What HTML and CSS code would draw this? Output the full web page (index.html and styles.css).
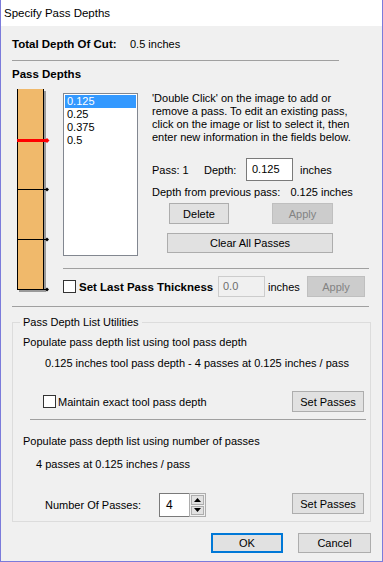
FILE: index.html
```html
<!DOCTYPE html>
<html>
<head>
<meta charset="utf-8">
<title>Specify Pass Depths</title>
<link rel="stylesheet" href="styles.css">
</head>
<body>
<div class="window">
  <div class="titlebar">Specify Pass Depths</div>
  <div class="content">
    <div class="total-row"><span class="total-label">Total Depth Of Cut:</span><span>0.5 inches</span></div>
    <div class="sep sep-top"></div>
    <div class="section-title">Pass Depths</div>
    <div class="pass-area">
      <svg class="diagram" width="34" height="206" viewBox="0 0 34 206">
        <rect x="2" y="2" width="27" height="201" fill="#9a9a9a"/>
        <rect x="0" y="0" width="27" height="201" fill="#f0b96b"/>
        <rect x="0" y="0" width="1" height="201" fill="#000"/>
        <rect x="26" y="0" width="1" height="201" fill="#000"/>
        <rect x="0" y="50" width="30" height="3" fill="#ff0000"/>
        <polygon points="30,49 32.5,51.5 30,54 27.5,51.5" fill="#ff0000"/>
        <rect x="0" y="100" width="30" height="1" fill="#000"/>
        <polygon points="30,98.5 32,100.5 30,102.5 28,100.5" fill="#000"/>
        <rect x="0" y="150" width="30" height="1" fill="#000"/>
        <polygon points="30,148.5 32,150.5 30,152.5 28,150.5" fill="#000"/>
        <rect x="0" y="200" width="30" height="1" fill="#000"/>
        <polygon points="30,198.5 32,200.5 30,202.5 28,200.5" fill="#000"/>
      </svg>
      <div class="pass-main">
        <div class="pass-top">
          <div class="listbox">
            <div class="item selected">0.125</div>
            <div class="item">0.25</div>
            <div class="item">0.375</div>
            <div class="item">0.5</div>
          </div>
          <div class="pass-side">
            <p class="help">'Double Click' on the image to add or<br>remove a pass. To edit an existing pass,<br>click on the image or list to select it, then<br>enter new information in the fields below.</p>
            <div class="depth-row">
              <span class="pass-label">Pass: 1</span>
              <span class="depth-label">Depth:</span>
              <div class="textbox depth-input">0.125</div>
              <span class="unit">inches</span>
            </div>
            <div class="prev-row"><span class="prev-label">Depth from previous pass:</span><span class="prev-value">0.125 inches</span></div>
            <div class="btn-row">
              <button class="btn btn-delete">Delete</button>
              <button class="btn btn-apply" disabled>Apply</button>
            </div>
            <button class="btn btn-clear">Clear All Passes</button>
          </div>
        </div>
        <div class="sep sep-mid"></div>
        <div class="last-row">
          <span class="checkbox"></span>
          <span class="last-label">Set Last Pass Thickness</span>
          <div class="textbox disabled last-input">0.0</div>
          <span class="last-unit">inches</span>
          <button class="btn btn-last-apply" disabled>Apply</button>
        </div>
      </div>
    </div>
    <div class="sep sep-wide"></div>
    <div class="group">
      <span class="legend">Pass Depth List Utilities</span>
      <div class="g-line">Populate pass depth list using tool pass depth</div>
      <div class="g-line g-info1">0.125 inches tool pass depth - 4 passes at 0.125 inches / pass</div>
      <div class="g-row g-row1">
        <span class="checkbox g-check"></span>
        <span class="g-check-label">Maintain exact tool pass depth</span>
        <button class="btn btn-set">Set Passes</button>
      </div>
      <div class="g-sep"></div>
      <div class="g-line g-title2">Populate pass depth list using number of passes</div>
      <div class="g-line g-info2">4 passes at 0.125 inches / pass</div>
      <div class="g-row g-row2">
        <span class="num-label">Number Of Passes:</span>
        <div class="spin">
          <div class="spin-input">4</div>
          <div class="spin-btns">
            <span class="spin-btn"><svg width="7" height="4" viewBox="0 0 7 4"><polygon points="0,4 3.5,0 7,4" fill="#000"/></svg></span>
            <span class="spin-btn"><svg width="7" height="4" viewBox="0 0 7 4"><polygon points="0,0 3.5,4 7,0" fill="#000"/></svg></span>
          </div>
        </div>
        <button class="btn btn-set">Set Passes</button>
      </div>
    </div>
    <div class="dialog-buttons">
      <button class="btn btn-ok">OK</button>
      <button class="btn btn-cancel">Cancel</button>
    </div>
  </div>
</div>
</body>
</html>
```
FILE: styles.css
```css
* { box-sizing: border-box; }
html, body { margin: 0; padding: 0; background: #f0f0f0; }
body {
  font-family: "Liberation Sans", Arial, sans-serif;
  font-size: 11px;
  color: #000;
}
span { white-space: nowrap; }
.window {
  width: 383px;
  height: 562px;
  border: 1px solid #7b7bdb;
  border-top: none;
  background: #f0f0f0;
  display: flex;
  flex-direction: column;
}
.titlebar {
  flex: none;
  height: 26px;
  line-height: 26px;
  background: #fff;
  padding-left: 3px;
  font-size: 11.5px;
}
.content {
  padding-left: 11px;
  display: flex;
  flex-direction: column;
}
.sep { height: 1px; background: #a0a0a0; flex: none; }
.total-row {
  margin-top: 10px;
  height: 16px;
  line-height: 16px;
  display: flex;
}
.total-label { width: 118px; font-weight: bold; font-size: 11.5px; }
.sep-top { margin-top: 8px; width: 327px; }
.section-title {
  margin-top: 5px;
  height: 16px;
  line-height: 16px;
  font-weight: bold;
  font-size: 11.5px;
}
.pass-area { display: flex; margin-top: 2px; }
.diagram { display: block; flex: none; margin: 5px 12px 0 5px; }
.pass-main { width: 306px; display: flex; flex-direction: column; }
.pass-top { display: flex; margin-top: 8px; }
.listbox {
  margin-top: 1px;
  width: 75px;
  height: 163px;
  border: 1px solid #828790;
  background: #fff;
  padding: 1px;
  flex: none;
}
.item { height: 13px; line-height: 13px; padding-left: 2px; }
.item.selected { background: #3399ff; color: #fff; }
.pass-side { margin-left: 14px; display: flex; flex-direction: column; align-items: flex-start; }
.help { margin: 0; line-height: 13px; white-space: nowrap; }
.depth-row { margin-top: 14px; height: 23px; display: flex; align-items: center; }
.pass-label { width: 52px; }
.depth-label { width: 42px; }
.textbox {
  border: 1px solid #7a7a7a;
  background: #fff;
  padding-left: 5px;
  white-space: nowrap;
}
.depth-input { width: 47px; height: 23px; line-height: 21px; }
.unit { margin-left: 7px; }
.prev-row { margin-top: 4px; line-height: 14px; height: 14px; display: flex; }
.prev-value { margin-left: 10px; }
.btn {
  font: inherit;
  color: #000;
  background: #e1e1e1;
  border: 1px solid #adadad;
  padding: 0;
  margin: 0;
  text-align: center;
  white-space: nowrap;
}
.btn:disabled { background: #cccccc; border-color: #bfbfbf; color: #838383; }
.btn-row { margin-top: 4px; display: flex; }
.btn-delete { margin-left: 17px; width: 60px; height: 21px; }
.btn-apply { margin-left: 43px; width: 61px; height: 21px; }
.btn-clear { margin-top: 9px; margin-left: 15px; width: 166px; height: 20px; }
.sep-mid { margin-top: 12px; width: 306px; }
.last-row { margin-top: 7px; height: 21px; display: flex; align-items: center; }
.checkbox {
  flex: none;
  width: 13px;
  height: 13px;
  border: 1px solid #333;
  background: #fff;
}
.last-label { margin-left: 3px; width: 139px; font-weight: bold; font-size: 11.5px; }
.textbox.disabled { border-color: #cccccc; background: #f0f0f0; color: #6d6d6d; padding-left: 4px; }
.last-input { width: 47px; height: 21px; line-height: 19px; }
.last-unit { margin-left: 3px; width: 39px; }
.btn-last-apply { width: 58px; height: 21px; }
.sep-wide { margin-top: 9px; width: 357px; }
.group {
  position: relative;
  margin-top: 15px;
  width: 359px;
  border: 1px solid #dcdcdc;
  padding: 12px 0 4px 10px;
  display: flex;
  flex-direction: column;
}
.legend {
  position: absolute;
  left: 7px;
  top: -8px;
  padding: 0 3px;
  background: #f0f0f0;
  line-height: 14px;
}
.g-line { line-height: 14px; height: 14px; white-space: nowrap; }
.g-info1 { margin-top: 7px; margin-left: 22px; }
.g-row { display: flex; }
.g-row1 { margin-top: 21px; height: 21px; align-items: center; }
.g-check { margin-left: 20px; }
.g-check-label { margin-left: 2px; }
.btn-set { margin-left: auto; margin-right: 6px; width: 72px; height: 21px; }
.g-sep { margin: 7px 4px 0 7px; height: 1px; background: #a0a0a0; }
.g-title2 { margin-top: 14px; }
.g-info2 { margin-top: 9px; margin-left: 13px; }
.g-row2 { margin-top: 22px; height: 24px; align-items: flex-start; }
.num-label { margin-left: 22px; width: 114px; line-height: 24px; }
.spin { display: flex; height: 24px; }
.spin-input {
  width: 30px;
  height: 24px;
  border: 1px solid #7a7a7a;
  border-right: none;
  background: #fff;
  padding-left: 6px;
  line-height: 22px;
  font-size: 12px;
}
.spin-btns {
  width: 17px;
  height: 24px;
  border: 1px solid #adadad;
  background: #f0f0f0;
  padding: 1px;
  display: flex;
  flex-direction: column;
  gap: 1px;
}
.spin-btn {
  flex: 1;
  border: 1px solid #adadad;
  background: #e1e1e1;
  display: flex;
  align-items: center;
  justify-content: center;
}
.spin-btn svg { display: block; }
.dialog-buttons {
  margin-top: 11px;
  margin-right: 11px;
  display: flex;
  justify-content: flex-end;
  gap: 15px;
}
.btn-ok { width: 72px; height: 20px; border: 2px solid #0078d7; }
.btn-cancel { width: 73px; height: 20px; }
```
